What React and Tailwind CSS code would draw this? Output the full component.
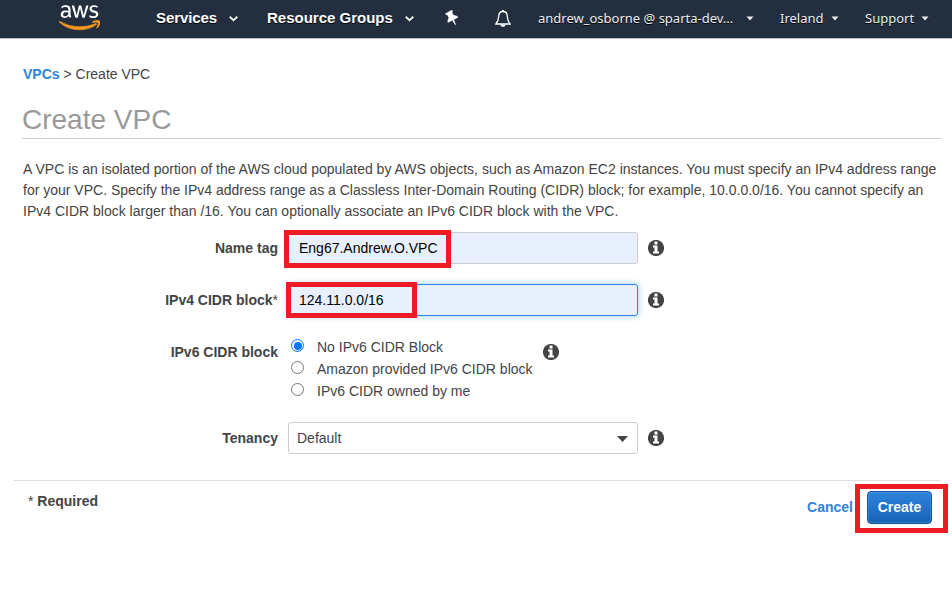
import { FaAws } from "react-icons/fa";

const navShadow = "[text-shadow:0_1px_0_#000]";

function AwsLogo() {
  return (
    <div className="ml-[59px] w-[41px] pt-[1px]">
      <div className="h-[19px] overflow-hidden text-white">
        <FaAws className="h-[33px] w-[41px]" />
      </div>
      <div className="h-[14px] overflow-hidden text-[#f7981f]">
        <FaAws className="-mt-[19px] h-[33px] w-[41px]" stroke="#f7981f" strokeWidth="10" />
      </div>
    </div>
  );
}

function Chevron({ className }) {
  return (
    <svg viewBox="0 0 9 6" className={`h-[6px] w-[9px] ${className}`}>
      <path d="M0.7 0.8 L4.5 4.2 L8.3 0.8" fill="none" stroke="#eee" strokeWidth="1.9" />
    </svg>
  );
}

function SmallCaret({ className }) {
  return (
    <svg viewBox="0 0 8 5" className={`h-[5px] w-[8px] ${className}`}>
      <path d="M0.5 0.5 H7.5 L4 4.5 Z" fill="#eee" />
    </svg>
  );
}

function Pin() {
  return (
    <svg viewBox="0 0 14 16" className="mt-[10px] ml-[31px] h-[16px] w-[14px]">
      <g transform="rotate(-28 7 8)" fill="#fff">
        <path d="M3.2 0.8 H10.8 V2.8 H9.8 V6.4 C11.6 7.1 12.8 8.5 12.8 10.4 H1.2 C1.2 8.5 2.4 7.1 4.2 6.4 V2.8 H3.2 Z" />
        <path d="M6 10.4 H8 L7.4 15.6 H6.6 Z" />
      </g>
    </svg>
  );
}

function Bell() {
  return (
    <svg viewBox="0 0 16 18" className="mt-[10px] ml-[36px] h-[18px] w-[16px]" fill="none" stroke="#fff">
      <path d="M8 1.5 C5 1.5 3.8 3.6 3.7 6.3 C3.6 9.9 2.9 11.6 0.9 14 H15.1 C13.1 11.6 12.4 9.9 12.3 6.3 C12.2 3.6 11 1.5 8 1.5 Z" strokeWidth="1.3" />
      <path d="M8 0 V1.5" strokeWidth="1.8" />
      <path d="M5.3 14.4 H10.7 C10.2 17.6 5.8 17.6 5.3 14.4 Z" fill="#fff" stroke="none" />
    </svg>
  );
}

function Info({ className }) {
  return (
    <svg viewBox="0 0 16 16" className={`h-[16px] w-[16px] ${className}`}>
      <circle cx="8" cy="8" r="8.1" fill="#444" />
      <path d="M6.5 1.6 H9.5 V4.4 H6.5 Z M5 5.6 H9.5 V11.6 H11 V13.6 H5 V11.6 H6.5 V7.6 H5 Z" fill="#fff" />
    </svg>
  );
}

function Label({ children }) {
  return <div className="w-[278px] text-right font-bold">{children}</div>;
}

function Radio({ label, checked }) {
  return (
    <div className="flex h-[22px] items-start">
      <span className={`mt-[1px] flex h-[13px] w-[13px] items-center justify-center rounded-full border ${checked ? "border-[#0075ff]" : "border-[#767676]"} bg-white`}>
        {checked && <span className="h-[8px] w-[8px] rounded-full bg-[#0075ff]" />}
      </span>
      <span className="ml-[13px] leading-[18px]">{label}</span>
    </div>
  );
}

export default function App() {
  return (
    <div className="h-[592px] w-[952px] overflow-hidden bg-white font-['Liberation_Sans',Arial,sans-serif] text-[14px] leading-[21px] text-[#444]">
      <header className={`flex h-[39px] items-start border-b border-[#b9bdc5] bg-[#232f3e] text-white ${navShadow}`}>
        <AwsLogo />
        <span className="mt-[7px] ml-[56px] w-[61px] text-[15px] font-bold tracking-[-0.1px] whitespace-nowrap">Services</span>
        <Chevron className="mt-[16px] ml-[12px]" />
        <span className="mt-[7px] ml-[29px] w-[127px] text-[15px] font-bold whitespace-nowrap">Resource Groups</span>
        <Chevron className="mt-[16px] ml-[11px]" />
        <Pin />
        <Bell />
        <div className="flex font-['Noto_Sans','Open_Sans',sans-serif] text-[13px] text-[#eee] whitespace-nowrap">
          <span className="mt-[8px] ml-[27px] w-[196px]">andrew_osborne @ sparta-dev...</span>
          <SmallCaret className="mt-[16px] ml-[12px]" />
          <span className="mt-[8px] ml-[26px] w-[44px]">Ireland</span>
          <SmallCaret className="mt-[16px] ml-[7px]" />
          <span className="mt-[8px] ml-[26px] w-[49px]">Support</span>
          <SmallCaret className="mt-[16px] ml-[7px]" />
        </div>
      </header>

      <main>
        <nav className="ml-[23px] pt-[25px]">
          <a className="font-bold text-[#2e83dc]">VPCs</a> &gt; Create VPC
        </nav>
        <h1 className="mt-[20px] ml-[22px] h-[34px] w-[919px] border-b border-[#ccc] text-[28px] leading-[29px] text-[#999]">Create VPC</h1>
        <p className="mt-[20px] ml-[23px] whitespace-nowrap">
          A VPC is an isolated portion of the AWS cloud populated by AWS objects, such as Amazon EC2 instances. You must specify an IPv4 address range
          <br />
          for your VPC. Specify the IPv4 address range as a Classless Inter-Domain Routing (CIDR) block; for example, 10.0.0.0/16. You cannot specify an
          <br />
          IPv4 CIDR block larger than /16. You can optionally associate an IPv6 CIDR block with the VPC.
        </p>

        <form>
          <div className="mt-[10px] flex h-[32px] items-center">
            <Label>Name tag</Label>
            <div className="relative ml-[10px] flex h-[32px] w-[350px] items-center rounded-[3px] border border-[#ccc] bg-[#e8f0fe] pl-[10px] text-black">
              Eng67.Andrew.O.VPC
              <span className="absolute -top-[3px] -left-[5px] h-[38px] w-[167px] border-[5px] border-[#ed1c24]" />
            </div>
            <Info className="ml-[10px]" />
          </div>

          <div className="mt-[20px] flex h-[32px] items-center">
            <Label>IPv4 CIDR block<span className="font-normal">*</span></Label>
            <div className="relative ml-[10px] flex h-[32px] w-[350px] items-center rounded-[3px] border border-[#2e83dc] bg-[#e8f0fe] pl-[10px] text-black shadow-[0_0_7px_rgba(82,168,236,0.6)]">
              124.11.0.0/16
              <span className="absolute -top-[3px] -left-[3px] h-[36px] w-[131px] border-[5px] border-[#ed1c24]" />
            </div>
            <Info className="ml-[10px]" />
          </div>

          <div className="mt-[22px] flex h-[66px] items-start">
            <div className="pt-[4px]"><Label>IPv6 CIDR block</Label></div>
            <div className="ml-[13px] w-[242px]">
              <Radio label="No IPv6 CIDR Block" checked />
              <Radio label="Amazon provided IPv6 CIDR block" />
              <Radio label="IPv6 CIDR owned by me" />
            </div>
            <Info className="mt-[6px] ml-[10px]" />
          </div>

          <div className="mt-[18px] flex h-[32px] items-center">
            <Label>Tenancy</Label>
            <div className="ml-[10px] flex h-[32px] w-[350px] items-center justify-between rounded-[3px] border border-[#ccc] bg-white pr-[9px] pl-[8px]">
              Default
              <svg viewBox="0 0 11 6" className="mt-[1px] h-[6px] w-[11px]"><path d="M0 0 H11 L5.5 6 Z" fill="#444" /></svg>
            </div>
            <Info className="ml-[10px]" />
          </div>
        </form>

        <footer className="mt-[26px] ml-[14px] flex w-[927px] items-start border-t border-[#ddd]">
          <div className="mt-[10px] ml-[14px] font-bold"><span className="font-normal">*</span> Required</div>
          <a className="mt-[16px] ml-auto font-bold text-[#2e83dc]">Cancel</a>
          <div className="relative mt-[10px] mr-[9px] ml-[14px]">
            <button type="button" className="block h-[33px] w-[65px] rounded-[4px] border border-[#0f57a6] bg-linear-to-b from-[#2e84dc] to-[#1463b5] font-bold text-white inset-shadow-[0_0_0_1px_rgba(255,255,255,0.12)]">Create</button>
            <span className="absolute -top-[7px] -left-[12px] h-[49px] w-[93px] border-[5px] border-[#ed1c24]" />
          </div>
        </footer>
      </main>
    </div>
  );
}
